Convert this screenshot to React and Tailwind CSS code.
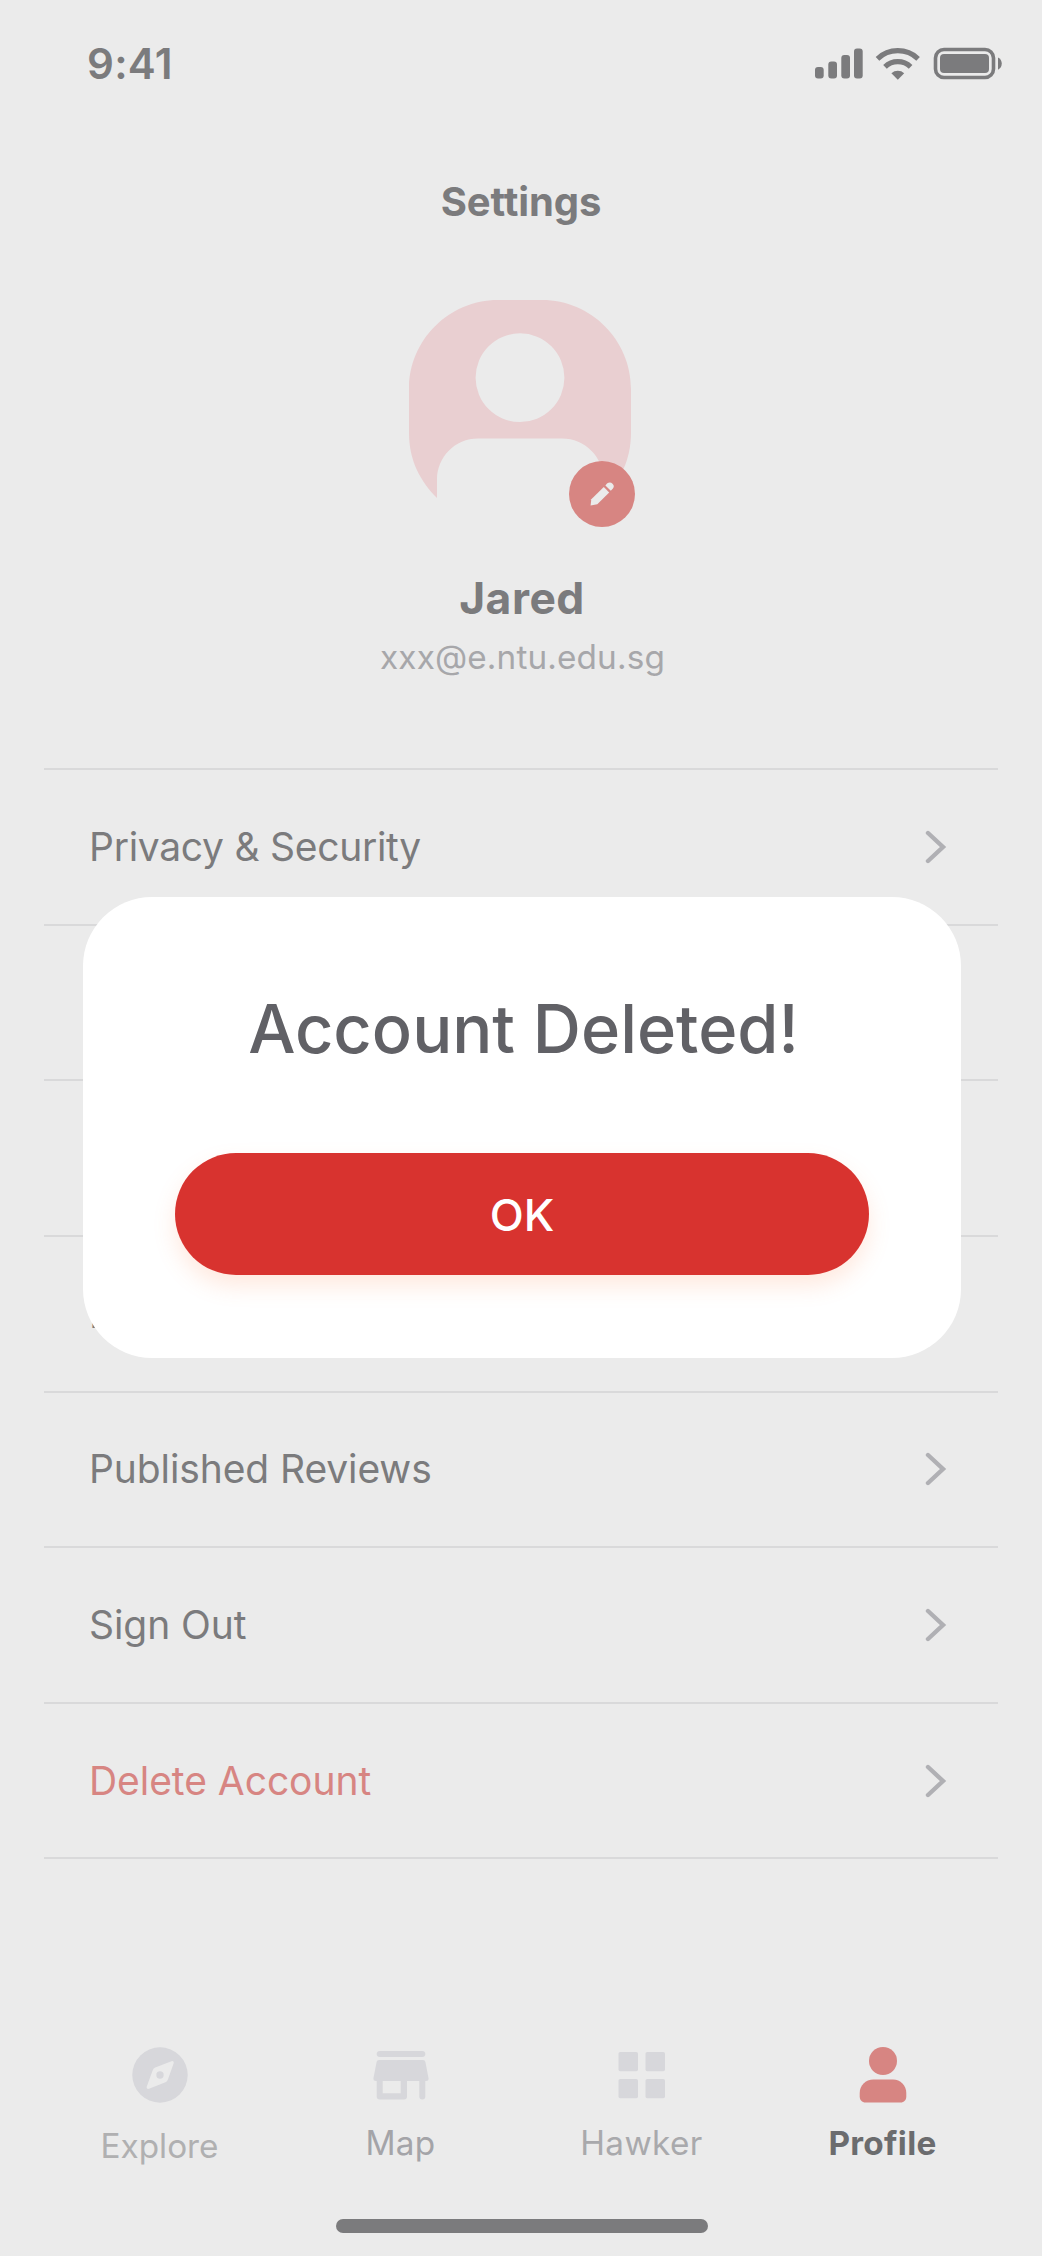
const rows = [
  { label: 'Privacy & Security', style: 'tracking-[-0.28px]' },
  { label: '' },
  { label: '' },
  { label: 'P', style: '' },
  { label: 'Published Reviews', style: 'tracking-[-0.1px]' },
  { label: 'Sign Out', style: 'tracking-[-0.08px]' },
  { label: 'Delete Account', style: 'tracking-[-0.05px] text-[#d78582]' },
];

function StatusBar() {
  return (
    <header className="flex h-[128px] items-center justify-between pl-[87px] pr-[40px]">
      <span className="text-[42px] leading-[50px] font-semibold tracking-[0.3px]">9:41</span>
      <svg width="188" height="34" viewBox="0 0 188 34" fill="#7b7b7d">
        <rect x="1" y="20" width="8.7" height="11.5" rx="3" />
        <rect x="14.3" y="14.5" width="8.7" height="17" rx="3" />
        <rect x="27.3" y="8" width="8.7" height="23.5" rx="3" />
        <rect x="40" y="1.5" width="8.7" height="30" rx="3" />
        <g fill="none" stroke="#7b7b7d" strokeWidth="5.2">
          <path d="M63.5 11.8a29.5 29.5 0 0 1 40.6 0" />
          <path d="M71 19.8a18.5 18.5 0 0 1 25.6 0" />
        </g>
        <path d="M77.4 26.2a9.6 9.6 0 0 1 12.8 0l-6.4 6.6z" />
        <rect x="121.5" y="2.5" width="58" height="28" rx="8.5" fill="none" stroke="#7b7b7d" strokeWidth="3.6" />
        <rect x="126" y="7" width="49" height="19" rx="4" />
        <path d="M184 10.5c5 2 5 10.2 0 12.2z" />
      </svg>
    </header>
  );
}

function Avatar() {
  return (
    <div className="relative h-[222px] w-[222px]">
      <svg width="222" height="222" viewBox="0 0 222 222">
        <path
          fillRule="evenodd"
          fill="#e9cfd1"
          d="M89 0H133C182 0 222 40 222 89V133C222 160 211 181 194.5 198V180C194.5 157 176 138.5 153 138.5H69C46 138.5 28 157 28 180V198C11 181 0 160 0 133V89C0 40 40 0 89 0ZM111 33.3a44.4 44.4 0 1 0 0 88.8a44.4 44.4 0 1 0 0-88.8Z"
        />
      </svg>
      <span className="absolute top-[161px] left-[160px] flex h-[66px] w-[66px] items-center justify-center rounded-full bg-[#d78582]">
        <svg width="24" height="24" viewBox="0 0 24 24" fill="#ebebeb">
          <path d="M.6 23.5L1.3 17.3L13.8 5L19.2 10.4L7.3 22.3Z" />
          <path d="M15.4 3.4L17 1.6C19 0 21 0 22.5 1.7C24.2 3.4 24.2 5.2 22.7 6.8L20.8 8.8Z" />
        </svg>
      </span>
    </div>
  );
}

function ExploreIcon() {
  return (
    <svg width="56" height="56" viewBox="0 0 56 56">
      <circle cx="28" cy="28" r="27.7" fill="#d7d7db" />
      <path d="M39.5 14.2C41.2 13.6 42.2 15 41.6 16.6L35.8 32.8Q35.2 34.6 33.5 35.2L17 41.8C15.3 42.4 14.2 41 14.8 39.4L20.8 23Q21.5 21.2 23.2 20.5Z" fill="#ebebeb" />
      <circle cx="28" cy="28" r="3.7" fill="#d7d7db" />
    </svg>
  );
}

function StoreIcon() {
  return (
    <svg width="56" height="56" viewBox="0 0 56 56" fill="#d7d7db">
      <rect x="3.7" y="4" width="48.6" height="6" rx="3" />
      <path
        fillRule="evenodd"
        d="M6 13H50Q52 13 52.4 15L55.5 31Q56 34 53 34H52.3V49.5a3 3 0 0 1-6 0V34H34V49.5Q34 52.5 31 52.5H6.7Q3.7 52.5 3.7 49.5V34H3Q0 34 .5 31L3.6 15Q4 13 6 13ZM9.7 34H27.7V46.3H9.7Z"
      />
    </svg>
  );
}

function GridIcon() {
  return (
    <svg width="56" height="56" viewBox="0 0 56 56" fill="#d7d7db">
      <rect x="4.5" y="5" width="19.5" height="19.3" rx="1.8" />
      <rect x="31.5" y="5" width="19.5" height="19.3" rx="1.8" />
      <rect x="4.5" y="32" width="19.5" height="19.3" rx="1.8" />
      <rect x="31.5" y="32" width="19.5" height="19.3" rx="1.8" />
    </svg>
  );
}

function ProfileIcon() {
  return (
    <svg width="56" height="56" viewBox="0 0 56 56" fill="#d78582">
      <circle cx="28" cy="14" r="14" />
      <path d="M18.5 32.5H38C45.5 32.5 51.3 38.5 51.3 46V49.5C51.3 53 49 55.5 45.5 55.5H10.5C7 55.5 4.7 53 4.7 49.5V46C4.7 38.5 10.5 32.5 18.5 32.5Z" />
    </svg>
  );
}

const tabs = [
  { label: 'Explore', Icon: ExploreIcon, text: 'mt-[23px] text-[#b0b0b1]' },
  { label: 'Map', Icon: StoreIcon, text: 'mt-5 tracking-[0.3px] text-[#a4a4a8]' },
  { label: 'Hawker', Icon: GridIcon, text: 'mt-5 tracking-[0.4px] text-[#a9a9ac]' },
  { label: 'Profile', Icon: ProfileIcon, text: 'mt-5 font-bold tracking-[0.3px] text-[#6b6c6e]' },
];

export default function App() {
  return (
    <div className="relative h-[2256px] w-[1042px] overflow-hidden bg-[#ebebeb] font-['Inter',sans-serif] text-[#7b7b7d]">
      <StatusBar />

      <section className="flex flex-col items-center">
        <h1 className="mt-[49px] text-[40px] leading-[50px] font-bold tracking-[-0.1px]">Settings</h1>
        <div className="mt-[73px] -ml-[2px]">
          <Avatar />
        </div>
        <h2 className="mt-[46px] ml-[2px] text-[44.4px] leading-[60px] font-bold tracking-[0.5px]">Jared</h2>
        <p className="mt-[9px] ml-[3px] text-[33.3px] leading-[40px] tracking-[0.15px] text-[#a7a7aa]">xxx@e.ntu.edu.sg</p>
      </section>

      <ul className="mx-[44px] mt-[91px] h-[1091px] border-t-2 border-[#d9d9da]">
        {rows.map((row, i) => (
          <li key={i} className="flex h-[155.65px] items-center justify-between border-b-2 border-[#d9d9da] pr-[51px] pl-[45px]">
            <span className={`text-[39px] leading-[50px] ${row.style ?? ''}`}>{row.label}</span>
            <svg width="22" height="34" viewBox="0 0 22 34" fill="none" stroke="#b0b0b4" strokeWidth="4.4" strokeLinecap="round">
              <path d="M3 3L18 17L3 31" />
            </svg>
          </li>
        ))}
      </ul>

      <nav className="mt-[188px] grid grid-cols-4 px-[39px]">
        {tabs.map(({ label, Icon, text }) => (
          <div key={label} className="flex flex-col items-center">
            <Icon />
            <span className={`text-[33.3px] leading-[40px] ${text}`}>{label}</span>
          </div>
        ))}
      </nav>

      <div className="absolute bottom-[23px] left-[336px] h-[14px] w-[372px] rounded-full bg-[#7b7b7d]" />

      <div role="dialog" className="absolute top-[897px] left-[83px] flex h-[461px] w-[878px] flex-col items-center rounded-[69px] bg-white">
        <h3 className="mt-[92px] ml-[3px] text-[66.7px] leading-[80px] font-medium whitespace-nowrap text-[#616166]">Account Deleted!</h3>
        <button className="mt-[84px] h-[122px] w-[694px] rounded-full bg-[#d8332f] pt-[2px] text-[44.4px] font-medium text-white shadow-[0_11px_22px_rgba(254,132,76,0.18)]">
          OK
        </button>
      </div>
    </div>
  );
}
